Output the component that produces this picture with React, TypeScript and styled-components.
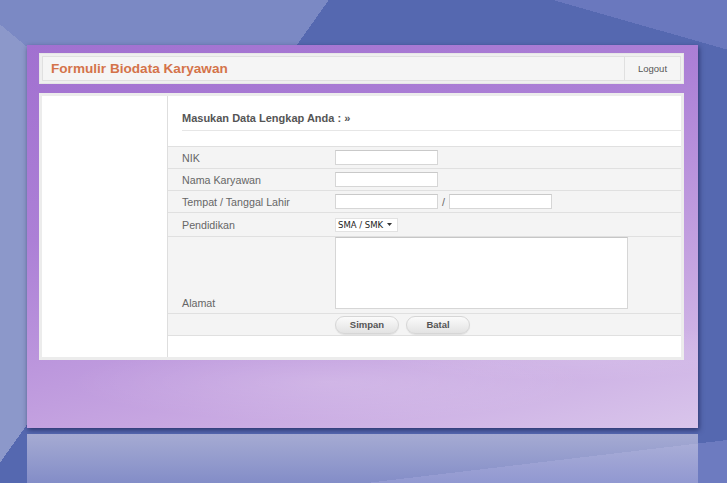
import styled, { createGlobalStyle } from "styled-components";

const GlobalStyle = createGlobalStyle`
    html, body {
        margin: 0;
        padding: 0;
    }
    body {
        width: 727px;
        height: 483px;
        overflow: hidden;
        font-family: "Liberation Sans", Arial, sans-serif;
    }
`;

// desktop backdrop: angled blue planes
const Stage = styled.div`
    width: 727px;
    height: 483px;
    box-sizing: border-box;
    padding: 45px 29px 0 27px;
    overflow: hidden;
    display: flex;
    flex-direction: column;
    background:
        linear-gradient(15.9deg, transparent 616px, #6a78be 616px),
        linear-gradient(173.2deg, transparent 523px, #6d7bc0 523px),
        linear-gradient(125.4deg, transparent 268px, #5568b0 268px),
        linear-gradient(219.8deg, transparent 484px, #8c98ca 484px),
        #7b89c4;
`;

const Window = styled.div`
    flex-shrink: 0;
    width: 671px;
    height: 383px;
    box-sizing: border-box;
    padding: 8px 14px 0 12px;
    display: flex;
    flex-direction: column;
    gap: 9px;
    background:
        radial-gradient(ellipse 260px 40px at 45% 88%, rgba(255, 255, 255, 0.16), transparent),
        radial-gradient(ellipse 200px 30px at 80% 80%, rgba(255, 255, 255, 0.14), transparent),
        linear-gradient(165deg, #a170d0 0%, #ac80d6 35%, #c6a5e1 72%, #d9c5eb 100%);
    box-shadow: 1px 2px 5px rgba(20, 25, 70, 0.65);
`;

const Reflection = styled.div`
    flex-shrink: 0;
    width: 671px;
    height: 49px;
    margin-top: 6px;
    background:
        linear-gradient(to bottom, rgba(215, 212, 232, 0.62), rgba(195, 192, 232, 0.42));
`;

const Header = styled.div`
    flex-shrink: 0;
    height: 31px;
    box-sizing: border-box;
    padding: 2px;
    background: #efefef;
    border: 1px solid #e6e6e6;
    display: flex;
`;

const HeaderInner = styled.div`
    flex: 1;
    display: flex;
    align-items: center;
    background: #f5f5f5;
    border: 1px solid #e0e0e0;
`;

const Title = styled.h1`
    flex: 1;
    margin: 0;
    padding-left: 8px;
    font-size: 13.6px;
    font-weight: bold;
    color: #d4734a;
`;

const LogoutCell = styled.div`
    width: 55px;
    align-self: stretch;
    display: flex;
    align-items: center;
    justify-content: center;
    border-left: 1px solid #e0e0e0;
    font-size: 9.5px;
    color: #555;
`;

const Content = styled.div`
    flex-shrink: 0;
    height: 267px;
    box-sizing: border-box;
    padding: 3px;
    background: #ececec;
    display: flex;
`;

const ContentInner = styled.div`
    flex: 1;
    display: flex;
    background: #fff;
`;

const Sidebar = styled.div`
    width: 125px;
    border-right: 1px solid #dedede;
`;

const Main = styled.div`
    flex: 1;
    display: flex;
    flex-direction: column;
`;

const Heading = styled.h2`
    margin: 0 0 15px 14px;
    padding: 15px 0 5px;
    border-bottom: 1px solid #e6e6e6;
    font-size: 11px;
    line-height: 14px;
    font-weight: bold;
    color: #555;
`;

const FormTable = styled.div`
    display: flex;
    flex-direction: column;
    border-bottom: 1px solid #e0e0e0;
`;

const FormRow = styled.div<{ $tall?: boolean; $height?: number }>`
    display: grid;
    grid-template-columns: 167px 1fr;
    align-items: ${(p) => (p.$tall ? "end" : "center")};
    height: ${(p) => p.$height ?? 21}px;
    padding-bottom: ${(p) => (p.$tall ? 4 : 0)}px;
    box-sizing: content-box;
    border-top: 1px solid #e0e0e0;
    background: #f4f4f4;
`;

const Label = styled.span`
    padding-left: 14px;
    font-size: 10.7px;
    line-height: 12px;
    color: #666;
`;

const Field = styled.div`
    display: flex;
    align-items: center;
    gap: 4px;
`;

const TextInput = styled.input`
    width: 103px;
    height: 15px;
    box-sizing: border-box;
    margin: 0;
    padding: 0 2px;
    border: 1px solid #d6d6d6;
    border-top-color: #c9c9c9;
    background: #fff;
    font-size: 10px;
`;

const Slash = styled.span`
    font-size: 10.7px;
    color: #666;
`;

const SelectBox = styled.div`
    width: 63px;
    height: 14px;
    box-sizing: border-box;
    display: flex;
    align-items: center;
    justify-content: space-between;
    padding: 0 5px 0 2px;
    background: #fff;
    border: 1px solid #e2e2e2;
    font-family: "DejaVu Sans", Verdana, sans-serif;
    font-size: 8.5px;
    color: #222;
`;

const TextArea = styled.textarea`
    width: 293px;
    height: 72px;
    box-sizing: border-box;
    margin: 0;
    resize: none;
    border: 1px solid #d6d6d6;
    border-top-color: #c6c6c6;
    background: #fff;
`;

const Button = styled.button`
    width: 64px;
    height: 18px;
    padding: 0;
    border: 1px solid #d6d6d6;
    border-radius: 9px;
    background: linear-gradient(#fbfbfb, #e3e3e3);
    box-shadow: 0 1px 1px rgba(0, 0, 0, 0.08);
    font-family: "Liberation Sans", Arial, sans-serif;
    font-size: 9.5px;
    font-weight: bold;
    color: #555;
`;

const ButtonGroup = styled.div`
    display: flex;
    gap: 7px;
`;

function App() {
    return (
        <>
            <GlobalStyle />
            <Stage>
                <Window>
                    <Header>
                        <HeaderInner>
                            <Title>Formulir Biodata Karyawan</Title>
                            <LogoutCell>Logout</LogoutCell>
                        </HeaderInner>
                    </Header>

                    <Content>
                        <ContentInner>
                            <Sidebar />
                            <Main>
                                <Heading>Masukan Data Lengkap Anda : »</Heading>
                                <FormTable>
                                    <FormRow>
                                        <Label>NIK</Label>
                                        <Field>
                                            <TextInput />
                                        </Field>
                                    </FormRow>
                                    <FormRow>
                                        <Label>Nama Karyawan</Label>
                                        <Field>
                                            <TextInput />
                                        </Field>
                                    </FormRow>
                                    <FormRow>
                                        <Label>Tempat / Tanggal Lahir</Label>
                                        <Field>
                                            <TextInput />
                                            <Slash>/</Slash>
                                            <TextInput />
                                        </Field>
                                    </FormRow>
                                    <FormRow $height={23}>
                                        <Label>Pendidikan</Label>
                                        <Field>
                                            <SelectBox>
                                                SMA / SMK
                                                <svg width="5" height="3" viewBox="0 0 5 3">
                                                    <path d="M0 0h5L2.5 3z" fill="#333" />
                                                </svg>
                                            </SelectBox>
                                        </Field>
                                    </FormRow>
                                    <FormRow $tall $height={72}>
                                        <Label>Alamat</Label>
                                        <Field>
                                            <TextArea />
                                        </Field>
                                    </FormRow>
                                    <FormRow>
                                        <span />
                                        <ButtonGroup>
                                            <Button>Simpan</Button>
                                            <Button>Batal</Button>
                                        </ButtonGroup>
                                    </FormRow>
                                </FormTable>
                            </Main>
                        </ContentInner>
                    </Content>
                </Window>
                <Reflection />
            </Stage>
        </>
    );
}

export default App;
